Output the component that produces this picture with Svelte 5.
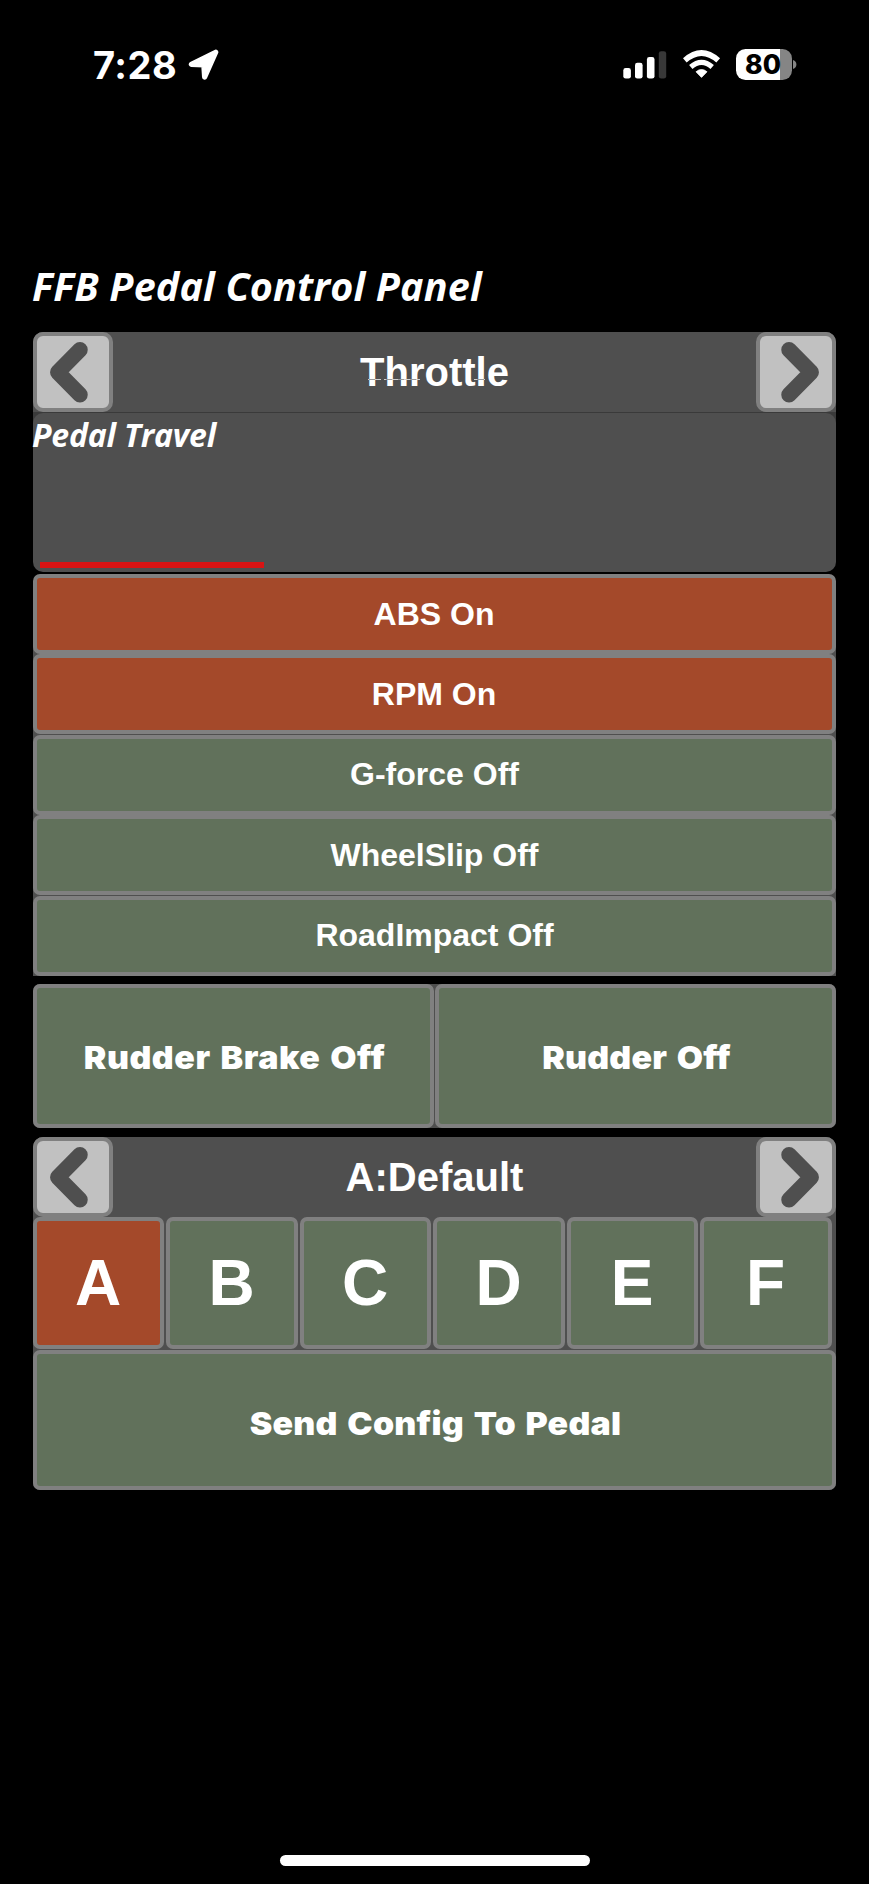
<script>
  const effects = [
    { label: 'ABS On', on: true },
    { label: 'RPM On', on: true },
    { label: 'G-force Off', on: false },
    { label: 'WheelSlip Off', on: false },
    { label: 'RoadImpact Off', on: false }
  ];
  const slots = ['A', 'B', 'C', 'D', 'E', 'F'];
  let active = $state('A');
  const travel = 27.9;
</script>

{#snippet arrow(dir)}
  <button class="arrow" aria-label={dir}>
    <svg width="80" height="80" viewBox="0 0 80 80" class:flip={dir === 'next'}>
      <path d="M47 17.8 L24.8 40.3 L47 62.8" fill="none" stroke="#4f4f4f" stroke-width="15.5" stroke-linecap="round" stroke-linejoin="round" />
    </svg>
  </button>
{/snippet}

<div class="screen">
  <header class="status">
    <span class="time">7:28</span>
    <svg class="loc" width="32" height="32" viewBox="0 0 32 32">
      <path d="M27.7 3.2 L3.4 15.4 L15.8 15.8 L16.6 28.2 Z" fill="#fff" stroke="#fff" stroke-width="5.2" stroke-linejoin="round" />
    </svg>
    <svg class="signal" width="44" height="28" viewBox="0 0 44 28">
      <rect x="0.3" y="17" width="7.6" height="10.6" rx="2.4" fill="#fff" />
      <rect x="12" y="11.8" width="7.6" height="15.8" rx="2.4" fill="#fff" />
      <rect x="23.9" y="6" width="7.6" height="21.6" rx="2.4" fill="#fff" />
      <rect x="35.8" y="0.2" width="7.4" height="27.4" rx="2.4" fill="#383838" />
    </svg>
    <svg class="wifi" width="38" height="28" viewBox="0 0 38 28">
      <path d="M18.5 27.4 L13 21.8 Q18.5 17.2 24 21.8 Z" fill="#fff" stroke="#fff" stroke-width="0.8" stroke-linejoin="round" />
      <path d="M7.8 16.9 Q18.5 7.8 29.2 16.9" fill="none" stroke="#fff" stroke-width="5.2" />
      <path d="M1.8 10.4 Q18.5 -4.4 35.2 10.4" fill="none" stroke="#fff" stroke-width="5.6" />
    </svg>
    <div class="battery">80</div>
    <svg class="nub" width="4" height="9" viewBox="0 0 4 9"><path d="M0 0 Q3.4 1.2 3.4 4.5 Q3.4 7.8 0 9 Z" fill="#858585" /></svg>
  </header>

  <main>
    <h1>FFB Pedal Control Panel</h1>

    <div class="top">
      <div class="selector">
        {@render arrow('previous')}
        <div class="name">
          Throttle
          <svg class="hairline" width="120" height="1" viewBox="0 0 120 1">
            <path d="M0 .5H1M7 .5H13M16 .5H18M24 .5H30M36 .5H42M48 .5H52M106 .5H109M116 .5H117" stroke="#d0d0d0" />
            <path d="M1 .5H7M18 .5H24M30 .5H36M42 .5H48M109 .5H116" stroke="#9a9a9a" />
          </svg>
        </div>
        {@render arrow('next')}
      </div>

      <section class="travel">
        <h2>Pedal Travel</h2>
        <div class="bar" style="width: {travel}%"></div>
      </section>
    </div>

    <div class="effects">
      {#each effects as e}
        <button class="btn" class:on={e.on}><span>{e.label}</span></button>
      {/each}
    </div>

    <div class="rudder">
      <button class="btn heavy"><span>Rudder Brake Off</span></button>
      <button class="btn heavy narrow"><span>Rudder Off</span></button>
    </div>

    <div class="profile">
      <div class="selector">
        {@render arrow('previous')}
        <div class="name">A:Default</div>
        {@render arrow('next')}
      </div>
      <div class="slots">
        {#each slots as s}
          <button class="btn slot" class:on={active === s} onclick={() => (active = s)}><span>{s}</span></button>
        {/each}
      </div>
      <button class="btn heavy send"><span>Send Config To Pedal</span></button>
    </div>
  </main>

  <div class="home"></div>
</div>

<style>
  :global(body) { background: #000; }
  .screen {
    box-sizing: border-box;
    width: 869px;
    height: 1884px;
    background: #000;
    color: #fff;
    font-family: "Liberation Sans", Arial, sans-serif;
    display: flex;
    flex-direction: column;
    overflow: hidden;
  }
  .status {
    height: 130px;
    padding-left: 93px;
    display: flex;
    align-items: center;
    flex: none;
  }
  .time {
    font: 750 38px/44px Inter, sans-serif;
    width: 84px;
    margin-top: -1px;
    letter-spacing: 0.5px;
    white-space: nowrap;
  }
  .loc { margin-left: 11px; }
  .signal { margin-left: 403px; margin-top: -1px; }
  .wifi { margin-left: 16px; margin-top: -2px; }
  .battery {
    width: 56px;
    height: 31px;
    margin-left: 15px;
    margin-top: -1px;
    border-radius: 9.5px;
    background: linear-gradient(90deg, #fff 44.5px, #858585 44.5px);
    color: #000;
    font: 850 26.5px/31px Inter, sans-serif;
    text-align: center;
    text-indent: -2px;
  }
  .nub { margin-left: 1px; margin-top: -1px; }
  main {
    width: 803px;
    margin-left: 33px;
    flex: none;
  }
  h1, h2 {
    margin: 0;
    font-family: "Open Sans", sans-serif;
    font-weight: 700;
    font-style: italic;
    white-space: nowrap;
    text-indent: -1px;
  }
  h1 { height: 72px; padding-top: 130px; font-size: 39.5px; line-height: 52px; letter-spacing: 0.17px; }
  h2 { font-size: 32px; line-height: 44px; letter-spacing: -0.2px; }
  .top { background: linear-gradient(#4f4f4f 20px, #3a3a3a 20px, #3a3a3a 100px, #000 100px); border-radius: 10px; }
  .selector {
    display: flex;
    height: 80px;
    background: #4f4f4f;
    border-radius: 10px 10px 0 0;
  }
  .name {
    position: relative;
    flex: 1;
    text-align: center;
    font-weight: 700;
    font-size: 40px;
    line-height: 81px;
  }
  .hairline { position: absolute; left: 255px; top: 47px; }
  button {
    box-sizing: border-box;
    display: block;
    margin: 0;
    padding: 0;
    border: 4px solid #808080;
    color: #fff;
    font: inherit;
  }
  .arrow {
    width: 80px;
    height: 80px;
    border-radius: 10px;
    background: #c1c1c1;
  }
  .arrow svg { display: block; margin: -4px; }
  .arrow svg.flip { transform: scaleX(-1); }
  .travel {
    box-sizing: border-box;
    height: 159px;
    margin-top: 1px;
    border-radius: 10px;
    background: #4f4f4f;
    display: flex;
    flex-direction: column;
    justify-content: space-between;
    padding-bottom: 4px;
  }
  .bar { height: 6px; margin-left: 6.5px; background: #d81414; }
  .effects {
    margin-top: 2px;
    display: grid;
    grid-template-rows: repeat(5, 80px);
    row-gap: 0.4px;
    height: 402px;
    background: linear-gradient(#000 20px, #4f4f4f 20px);
  }
  .btn {
    border-radius: 7px;
    background: #61715b;
    font-weight: 700;
    font-size: 32px;
    text-align: center;
    white-space: nowrap;
  }
  .btn.on { background: #a4492a; }
  .slot, .btn.on { text-indent: -1px; }
  .heavy {
    font-family: Inter, sans-serif;
    font-weight: 900;
    font-size: 32px;
    letter-spacing: 0.35px;
    word-spacing: 2.5px;
  }
  .heavy span { display: block; transform: translate(1px, 1px) scaleX(1.06); }
  .narrow { letter-spacing: 0.2px; }
  .rudder {
    margin-top: 8px;
    height: 144px;
    display: grid;
    grid-template-columns: 401px 401px;
    gap: 1px;
    background: #4f4f4f;
    border-radius: 7px;
  }
  .rudder .heavy:first-child { letter-spacing: 0.5px; }
  .profile { margin-top: 9px; background: #4f4f4f; border-radius: 10px 10px 7px 7px; }
  .slots {
    display: flex;
    gap: 2.2px;
    height: 132px;
    padding-bottom: 1px;
  }
  .slot { width: 131.3px; height: 132px; font-size: 64px; }
  .send { width: 803px; height: 140px; padding-top: 4px; letter-spacing: 0.2px; }
  .home {
    width: 310px;
    height: 11px;
    border-radius: 6px;
    background: #fff;
    margin: auto auto 18px 280px;
  }
</style>
